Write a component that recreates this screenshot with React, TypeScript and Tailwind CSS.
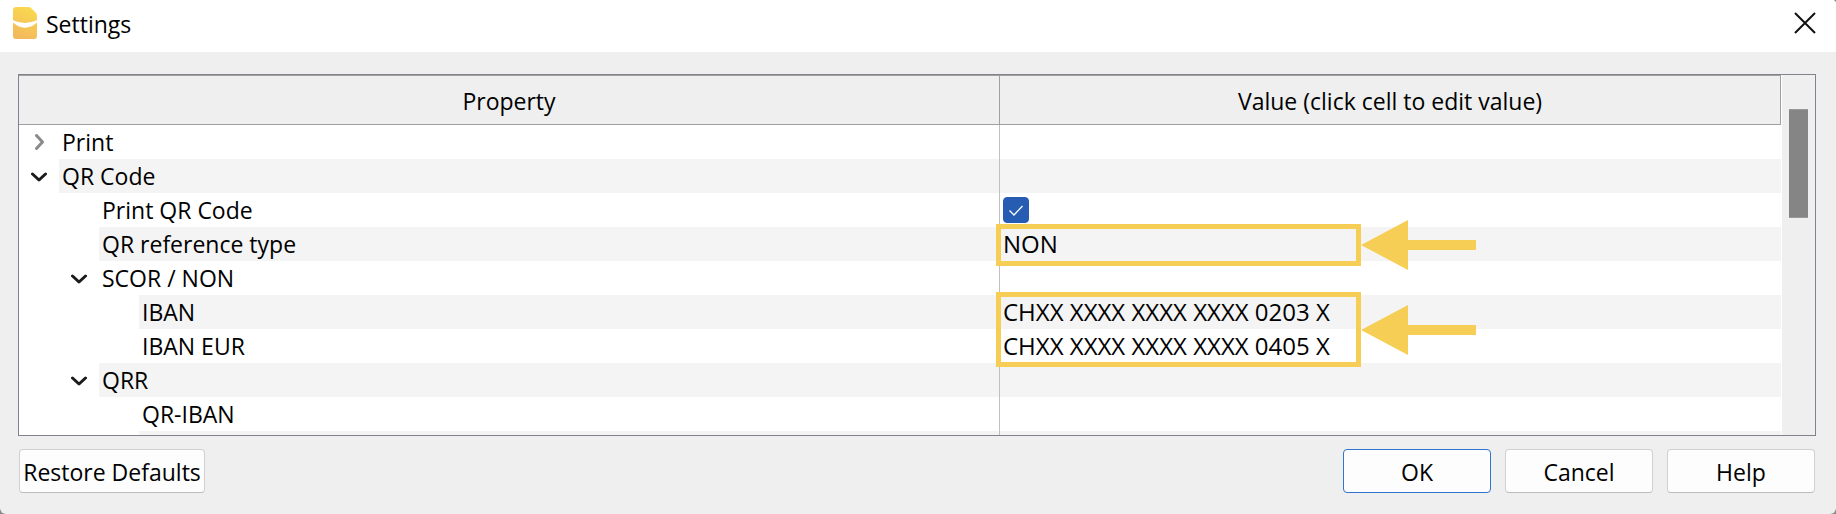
import { useState } from "react";

type Row = {
  label: string;
  level: number;
  expanded?: boolean;
  value?: string;
  checkbox?: boolean;
  mark?: "single" | "double";
};

const rows: Row[] = [
  { label: "Print", level: 0, expanded: false },
  { label: "QR Code", level: 0, expanded: true },
  { label: "Print QR Code", level: 1, checkbox: true },
  { label: "QR reference type", level: 1, value: "NON", mark: "single" },
  { label: "SCOR / NON", level: 1, expanded: true },
  { label: "IBAN", level: 2, value: "CHXX XXXX XXXX XXXX 0203 X", mark: "double" },
  { label: "IBAN EUR", level: 2, value: "CHXX XXXX XXXX XXXX 0405 X" },
  { label: "QRR", level: 1, expanded: true },
  { label: "QR-IBAN", level: 2 },
  { label: "", level: 2 },
];

const indents = ["pl-0", "pl-10", "pl-20"];

function Logo() {
  return (
    <svg width="24" height="32" viewBox="0 0 24 32" aria-hidden="true">
      <defs>
        <linearGradient id="logo" x1="0.6" y1="0" x2="0.3" y2="1">
          <stop offset="0" stopColor="#f9d94f" />
          <stop offset="1" stopColor="#f3b75c" />
        </linearGradient>
      </defs>
      <path
        d="M3 0H15.500Q17 0 18 1L23 6Q24 7 24 8.500V29Q24 32 21 32H3Q0 32 0 29V3Q0 0 3 0Z"
        fill="url(#logo)"
      />
      <path d="M0 13.300Q12 18.700 24 13.300V15.500Q12 25.900 0 15.500Z" fill="#fff" />
    </svg>
  );
}

function Expander({ label, initial }: { label: string; initial: boolean }) {
  const [open, setOpen] = useState(initial);
  return (
    <button
      type="button"
      aria-label={label}
      aria-expanded={open}
      onClick={() => setOpen(!open)}
      className="flex h-full w-full items-center justify-center"
    >
      <svg width="16" height="16" viewBox="0 0 16 16" fill="none" strokeWidth="3" strokeLinecap="round" strokeLinejoin="round">
        {open ? (
          <path d="M1.500 6L8 12L14.500 6" stroke="#1b1b1b" />
        ) : (
          <path d="M5.500 1.500L11.500 8L5.500 14.500" stroke="#8a8a8a" />
        )}
      </svg>
    </button>
  );
}

function Arrow() {
  return (
    <svg width="115" height="50" viewBox="0 0 115 50" fill="#f7ce55" className="shrink-0" aria-hidden="true">
      <path d="M0 25L47 0V20H115V30H47V50Z" />
    </svg>
  );
}

function Mark({ kind }: { kind: "single" | "double" }) {
  return (
    <div
      className={`pointer-events-none absolute -left-1 z-10 flex items-center ${
        kind === "single" ? "-top-[3px] h-[42px]" : "-top-[3px] h-[75px]"
      }`}
    >
      <div className="h-full w-[365px] border-5 border-[#f7ce55]" />
      <Arrow />
    </div>
  );
}

const button =
  "flex h-11 items-center justify-center whitespace-nowrap rounded border bg-[#fdfdfd] pt-0.5 hover:bg-[#f5f9fd]";
const gray = "border-[#d0d0d0] border-b-[#bcbcbc]";

export default function App() {
  const [checked, setChecked] = useState(true);
  return (
    <div className="bg-[#8a8a8a] font-['Open_Sans',sans-serif] text-[23px] leading-[34px] text-black">
      <div className="overflow-hidden rounded-b-md rounded-tr-sm bg-[#efefef]">
        <header className="flex h-[52px] items-center bg-white pr-5 pl-[13px]">
          <div className="-mt-1.5 flex flex-1 items-center gap-[9px]">
            <Logo />
            <h1 className="mt-0.5">Settings</h1>
          </div>
          <button type="button" aria-label="Close" className="-mt-1.5">
            <svg width="22" height="22" viewBox="0 0 22 22" stroke="#111" strokeWidth="2" fill="none">
              <path d="M1 1L21 21M21 1L1 21" />
            </svg>
          </button>
        </header>

        <main className="pt-[22px] pr-5 pb-[21px] pl-[18px]">
          <div className="flex h-[362px] overflow-hidden border border-[#82828c] bg-white">
            <table className="h-fit min-w-0 flex-1 table-fixed border-separate border-spacing-0">
              <colgroup>
                <col className="w-[981px]" />
                <col />
              </colgroup>
              <thead>
                <tr className="h-[50px] bg-[#efefef]">
                  <th className="border-y border-r border-[#a0a0a0] p-0 pt-0.5 font-normal">Property</th>
                  <th className="border-y border-r border-[#a0a0a0] p-0 pt-0.5 font-normal">
                    Value (click cell to edit value)
                  </th>
                </tr>
              </thead>
              <tbody>
                {rows.map((row, i) => {
                  const stripe = i % 2 ? "bg-[#f4f4f4]" : "bg-white";
                  return (
                    <tr key={i} className="h-[34px]">
                      <td className="border-r border-[#c0c0c0] p-0">
                        <div className={`flex h-[34px] ${indents[row.level]}`}>
                          <div className="w-10 shrink-0">
                            {row.expanded !== undefined && (
                              <Expander label={row.label} initial={row.expanded} />
                            )}
                          </div>
                          <div className={`flex-1 pl-[3px] ${stripe}`}>
                            {row.checkbox ? <label htmlFor="print-qr">{row.label}</label> : row.label}
                          </div>
                        </div>
                      </td>
                      <td className={`p-0 text-[24px] leading-[34px] ${stripe}`}>
                        <div className="relative flex h-[34px] items-center pl-[3px]">
                          {row.checkbox && (
                            <span className="grid">
                              <input
                                id="print-qr"
                                type="checkbox"
                                checked={checked}
                                onChange={() => setChecked(!checked)}
                                className="col-start-1 row-start-1 size-[26px] appearance-none rounded border border-[#8a8a8a] bg-white checked:border-[#265db3] checked:bg-[#265db3]"
                              />
                              {checked && (
                                <svg
                                  viewBox="0 0 26 26"
                                  className="pointer-events-none col-start-1 row-start-1 size-[26px]"
                                  fill="none"
                                  stroke="#fff"
                                  strokeWidth="1.3"
                                >
                                  <path d="M6.500 13.500L11 18L19.500 9" />
                                </svg>
                              )}
                            </span>
                          )}
                          {row.value}
                          {row.mark && <Mark kind={row.mark} />}
                        </div>
                      </td>
                    </tr>
                  );
                })}
              </tbody>
            </table>
            <div className="ml-px w-[33px] shrink-0 bg-[#efefef] pt-[34px] pl-[7px]">
              <div className="h-[109px] w-[19px] border-y border-[#989898] bg-[#858585]" />
            </div>
          </div>

          <footer className="mt-[13px] flex gap-3.5 pr-px pl-px">
            <button type="button" className={`${button} ${gray} mr-auto w-[186px]`}>
              Restore Defaults
            </button>
            <button type="button" className={`${button} w-[148px] border-[#2f74cf]`}>
              OK
            </button>
            <button type="button" className={`${button} ${gray} w-[148px]`}>
              Cancel
            </button>
            <button type="button" className={`${button} ${gray} w-[148px]`}>
              Help
            </button>
          </footer>
        </main>
      </div>
    </div>
  );
}
